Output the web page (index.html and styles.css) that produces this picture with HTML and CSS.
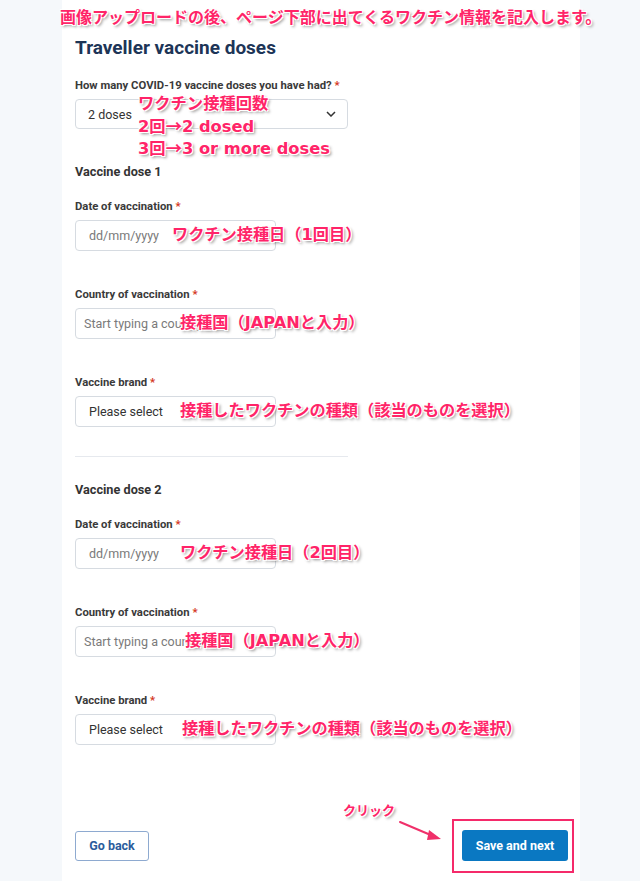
FILE: index.html
```html
<!DOCTYPE html>
<html lang="en">
<head>
<meta charset="utf-8">
<title>Traveller vaccine doses</title>
<link rel="stylesheet" href="styles.css">
</head>
<body>
<div class="page">
  <p class="note note-top">画像アップロードの後、ページ下部に出てくるワクチン情報を記入します。</p>
  <main class="card">
    <h1 class="title">Traveller vaccine doses</h1>

    <div class="field field-count">
      <label class="label">How many COVID-19 vaccine doses you have had? <span class="req">*</span></label>
      <div class="select">
        <span>2 doses</span>
        <svg class="chev" width="10" height="6" viewBox="0 0 10 6"><path d="M1 1l4 4 4-4" fill="none" stroke="#333" stroke-width="1.5"/></svg>
      </div>
      <p class="note note-count">ワクチン接種回数<br>2回<span class="jp-arrow">→</span>2 dosed<br>3回<span class="jp-arrow">→</span>3 or more doses</p>
    </div>

    <section class="dose">
      <h2 class="dose-title">Vaccine dose 1</h2>
      <div class="field">
        <label class="label">Date of vaccination <span class="req">*</span></label>
        <div class="input placeholder">dd/mm/yyyy</div>
        <p class="note note-date1">ワクチン接種日（1回目）</p>
      </div>
      <div class="field field-gap">
        <label class="label">Country of vaccination <span class="req">*</span></label>
        <div class="input input-country placeholder">Start typing a country</div>
        <p class="note note-c1">接種国（JAPANと入力）</p>
      </div>
      <div class="field field-gap">
        <label class="label">Vaccine brand <span class="req">*</span></label>
        <div class="input value">Please select</div>
        <p class="note note-c1">接種したワクチンの種類（該当のものを選択）</p>
      </div>
    </section>

    <hr class="divider">

    <section class="dose dose-2">
      <h2 class="dose-title">Vaccine dose 2</h2>
      <div class="field">
        <label class="label">Date of vaccination <span class="req">*</span></label>
        <div class="input placeholder">dd/mm/yyyy</div>
        <p class="note note-c1">ワクチン接種日（2回目）</p>
      </div>
      <div class="field field-gap">
        <label class="label">Country of vaccination <span class="req">*</span></label>
        <div class="input input-country placeholder">Start typing a country</div>
        <p class="note note-c2">接種国（JAPANと入力）</p>
      </div>
      <div class="field field-gap">
        <label class="label">Vaccine brand <span class="req">*</span></label>
        <div class="input value">Please select</div>
        <p class="note note-b2">接種したワクチンの種類（該当のものを選択）</p>
      </div>
    </section>

    <div class="actions">
      <button class="btn btn-secondary" type="button">Go back</button>
      <button class="btn btn-primary" type="button">Save and next</button>
    </div>
  </main>

  <span class="highlight"></span>
  <p class="note note-click">クリック</p>
  <svg class="arrow" width="50" height="26" viewBox="0 0 50 26">
    <path d="M1 2 L34 16" stroke="#f0306a" stroke-width="2" stroke-linecap="round"/>
    <path d="M30 10 L42 19 L28 20 Z" fill="#f0306a"/>
  </svg>
</div>
</body>
</html>
```

FILE: styles.css
```css
* { box-sizing: border-box; }

body {
  margin: 0;
  background: #f5f8fb;
  font-family: Roboto, "Liberation Sans", sans-serif;
  color: #333;
}

.page {
  position: relative;
  width: 640px;
  min-height: 881px;
}

.card {
  margin-left: 62px;
  width: 518px;
  min-height: 881px;
  background: #fff;
  padding: 36px 12px 0 13px;
}

.title {
  margin: 0;
  font-size: 19px;
  line-height: 24px;
  font-weight: 700;
  color: #1d3557;
}

.field { position: relative; }
.field-count { margin-top: 19px; }
.field-gap { margin-top: 37px; }

.label {
  display: block;
  font-size: 11.3px;
  line-height: 14px;
  font-weight: 700;
  color: #3a3a3a;
  margin-bottom: 6px;
}

.req { color: #d4351c; }

.select {
  width: 273px;
  height: 30px;
  border: 1px solid #d6dbe1;
  border-radius: 4px;
  display: flex;
  align-items: center;
  justify-content: space-between;
  padding: 0 11px 0 12px;
  font-size: 12.5px;
  color: #333;
}

.input {
  width: 201px;
  height: 31px;
  border: 1px solid #d6dbe1;
  border-radius: 4px;
  display: flex;
  align-items: center;
  padding: 0 12px 0 13px;
  font-size: 12.5px;
  white-space: nowrap;
  overflow: hidden;
}

.input-country { padding-left: 8px; }
.placeholder { color: #7a7a7a; }
.value { color: #333; }

.dose { margin-top: 35px; }
.dose-2 { margin-top: 25px; }

.dose-title {
  margin: 0 0 20px;
  font-size: 12.7px;
  line-height: 16px;
  font-weight: 700;
  color: #333;
}

.divider {
  margin: 29px 0 0;
  width: 273px;
  height: 1px;
  border: 0;
  background: #e6e9ee;
}

.actions {
  margin-top: 85px;
  display: flex;
  justify-content: space-between;
  align-items: center;
}

.btn {
  font-family: Roboto, "Liberation Sans", sans-serif;
  font-size: 12.5px;
  font-weight: 700;
  border-radius: 3px;
  cursor: pointer;
}

.btn-secondary {
  width: 74px;
  height: 30px;
  background: #fff;
  border: 1px solid #8eaad0;
  color: #2b5c9c;
}

.btn-primary {
  width: 106px;
  height: 31px;
  background: #0a78c2;
  border: 0;
  color: #fff;
}

/* pink annotations */
.note {
  position: absolute;
  margin: 0;
  font-family: "DejaVu Sans", "Noto Sans CJK JP", sans-serif;
  font-weight: 700;
  font-size: 16.2px;
  line-height: 20px;
  color: #ff2468;
  white-space: nowrap;
  text-shadow:
    -1px -1px 0 #fff, 1px -1px 0 #fff, -1px 1px 0 #fff, 1px 1px 0 #fff,
    2px 2px 3px rgba(0, 0, 0, 0.45);
}

.jp-arrow { font-family: "Noto Sans CJK JP", sans-serif; }

.note-top { left: 60px; top: 8px; font-size: 16px; }
.note-count { left: 63px; top: 14px; font-size: 16.3px; line-height: 21.5px; }
.note-date1 { left: 97px; top: 25px; }
.note-c1 { left: 105px; top: 25px; }
.note-c2 { left: 110px; top: 25px; }
.note-b2 { left: 107px; top: 25px; }
.note-click { left: 343px; top: 801px; font-size: 13px; }

.highlight {
  position: absolute;
  left: 452px;
  top: 819px;
  width: 122px;
  height: 54px;
  border: 2px solid #f52a6a;
}

.arrow {
  position: absolute;
  left: 399px;
  top: 820px;
}
```
